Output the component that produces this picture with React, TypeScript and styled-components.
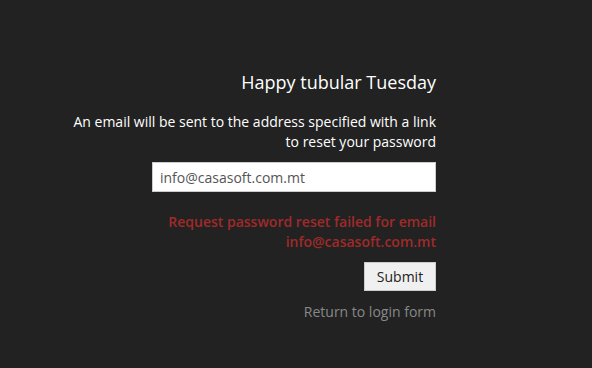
import React, { useState } from 'react';
import styled, { createGlobalStyle } from 'styled-components';

const GlobalStyle = createGlobalStyle`
  html, body {
    margin: 0;
    padding: 0;
    background: #222222;
    font-family: 'Open Sans', 'Liberation Sans', sans-serif;
  }
`;

const Page = styled.div`
  min-height: 368px;
  background: #222222;
  padding: 70px 156px 0 0;
  box-sizing: border-box;
  display: flex;
  justify-content: flex-end;
`;

const Form = styled.form`
  display: flex;
  flex-direction: column;
  align-items: flex-end;
  text-align: right;
  width: 380px;
`;

const Title = styled.h1`
  margin: 0;
  font-size: 18px;
  font-weight: 400;
  line-height: 25px;
  color: #ffffff;
`;

const Description = styled.p`
  margin: 17px 0 0;
  font-size: 14px;
  line-height: 20px;
  color: #ffffff;
`;

const EmailInput = styled.input`
  margin-top: 10px;
  width: 284px;
  height: 30px;
  box-sizing: border-box;
  padding: 0 7px;
  border: 1px solid #cccccc;
  background: #ffffff;
  color: #555555;
  font-family: inherit;
  font-size: 14px;
  outline: none;
`;

const ErrorText = styled.p`
  margin: 20px 0 0;
  font-size: 14px;
  font-weight: 600;
  line-height: 20px;
  color: #a02a2a;
`;

const SubmitButton = styled.button`
  margin-top: 10px;
  width: 72px;
  height: 29px;
  box-sizing: border-box;
  border: 1px solid #cccccc;
  background: #f0f0f0;
  color: #222222;
  font-family: inherit;
  font-size: 14px;
  cursor: pointer;
`;

const ReturnLink = styled.a`
  margin-top: 11px;
  font-size: 14px;
  line-height: 20px;
  color: #888888;
  text-decoration: none;
  cursor: pointer;
`;

const App: React.FC = () => {
  const [email, setEmail] = useState('info@casasoft.com.mt');

  return (
    <>
      <GlobalStyle />
      <Page>
        <Form onSubmit={(e) => e.preventDefault()}>
          <Title>Happy tubular Tuesday</Title>
          <Description>
            An email will be sent to the address specified with a link
            <br />
            to reset your password
          </Description>
          <EmailInput value={email} onChange={(e) => setEmail(e.target.value)} />
          <ErrorText>
            Request password reset failed for email
            <br />
            info@casasoft.com.mt
          </ErrorText>
          <SubmitButton type="submit">Submit</SubmitButton>
          <ReturnLink>Return to login form</ReturnLink>
        </Form>
      </Page>
    </>
  );
};

export default App;
